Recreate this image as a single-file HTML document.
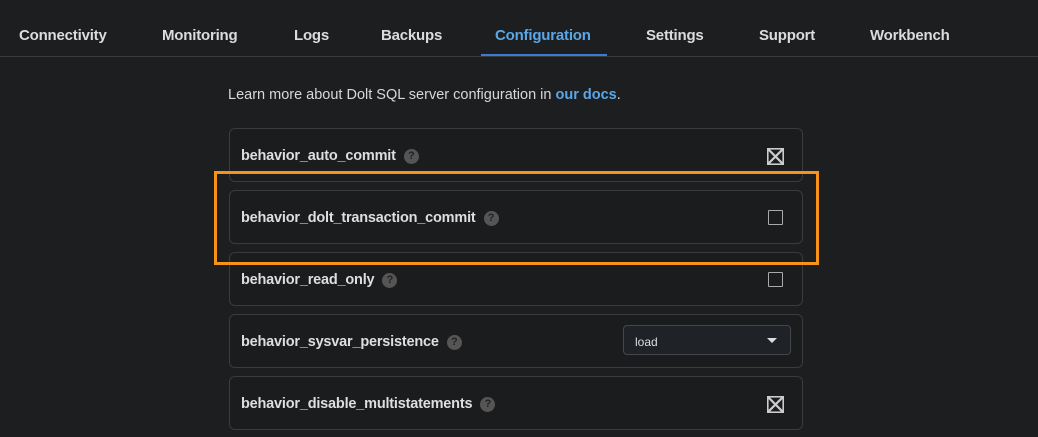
<!DOCTYPE html>
<html><head><style>
body{margin:0;width:1038px;height:437px;background:#1d1e20;font-family:"Liberation Sans",sans-serif;position:relative;overflow:hidden;color:#e0e0e0}
.tab{position:absolute;top:27px;font-size:15px;font-weight:bold;color:#dcdcdc;letter-spacing:-0.2px}
.line{position:absolute;left:0;top:56px;width:1038px;height:1px;background:#3a3b3e}
.act{position:absolute;left:481px;top:54px;width:126px;height:2px;background:#3a7bd5}
.intro{position:absolute;left:228px;top:87px;font-size:14.5px;color:#d8d8d8}
.intro b{color:#5aa7e8}
.card{position:absolute;left:229px;width:574px;height:54px;border:1.5px solid #3a3b3e;border-radius:6px;box-sizing:border-box;background:#1b1c1e}
.card span.l{position:absolute;left:11px;top:19px;font-size:14.5px;font-weight:bold;color:#dedede;letter-spacing:-0.2px}
.q{display:inline-block;width:15px;height:15px;border-radius:50%;background:#555;color:#222;font-size:11px;text-align:center;line-height:15px;margin-left:8px;vertical-align:1px}
.cb{position:absolute;right:19px;top:19px;width:15px;height:15px;border:1px solid #aaa;box-sizing:border-box;border-radius:1px}
.x{position:absolute;right:18px;top:19px;width:17px;height:17px}
.sel{position:absolute;left:393px;top:10px;width:168px;height:30px;border:1px solid #454649;border-radius:4px;box-sizing:border-box;background:#1f2226;font-size:12px;color:#ddd;padding:9px 0 0 11px}
.sel i{position:absolute;right:13px;top:12px;width:0;height:0;border-left:5px solid transparent;border-right:5px solid transparent;border-top:5px solid #ddd}
.hl{position:absolute;left:214px;top:171px;width:605px;height:94px;border:3px solid #f7931a;box-sizing:border-box}
</style></head><body>
<div class="tab" style="left:19px">Connectivity</div>
<div class="tab" style="left:162px">Monitoring</div>
<div class="tab" style="left:294px">Logs</div>
<div class="tab" style="left:381px">Backups</div>
<div class="tab" style="left:495px;color:#5aa7e8">Configuration</div>
<div class="tab" style="left:646px">Settings</div>
<div class="tab" style="left:759px">Support</div>
<div class="tab" style="left:870px">Workbench</div>
<div class="line"></div><div class="act"></div>
<div class="intro">Learn more about Dolt SQL server configuration in <b>our docs</b>.</div>
<div class="card" style="top:128px"><span class="l">behavior_auto_commit<span class="q">?</span></span><svg class="x" viewBox="0 0 16 16"><rect x="0.75" y="0.75" width="14.5" height="14.5" fill="none" stroke="#ccc" stroke-width="1.5"/><path d="M1 1L15 15M15 1L1 15" stroke="#ccc" stroke-width="2"/></svg></div>
<div class="card" style="top:190px"><span class="l">behavior_dolt_transaction_commit<span class="q">?</span></span><div class="cb"></div></div>
<div class="card" style="top:252px"><span class="l">behavior_read_only<span class="q">?</span></span><div class="cb"></div></div>
<div class="card" style="top:314px"><span class="l">behavior_sysvar_persistence<span class="q">?</span></span><div class="sel">load<i></i></div></div>
<div class="card" style="top:376px"><span class="l">behavior_disable_multistatements<span class="q">?</span></span><svg class="x" viewBox="0 0 16 16"><rect x="0.75" y="0.75" width="14.5" height="14.5" fill="none" stroke="#ccc" stroke-width="1.5"/><path d="M1 1L15 15M15 1L1 15" stroke="#ccc" stroke-width="2"/></svg></div>
<div class="hl"></div>
</body></html>
